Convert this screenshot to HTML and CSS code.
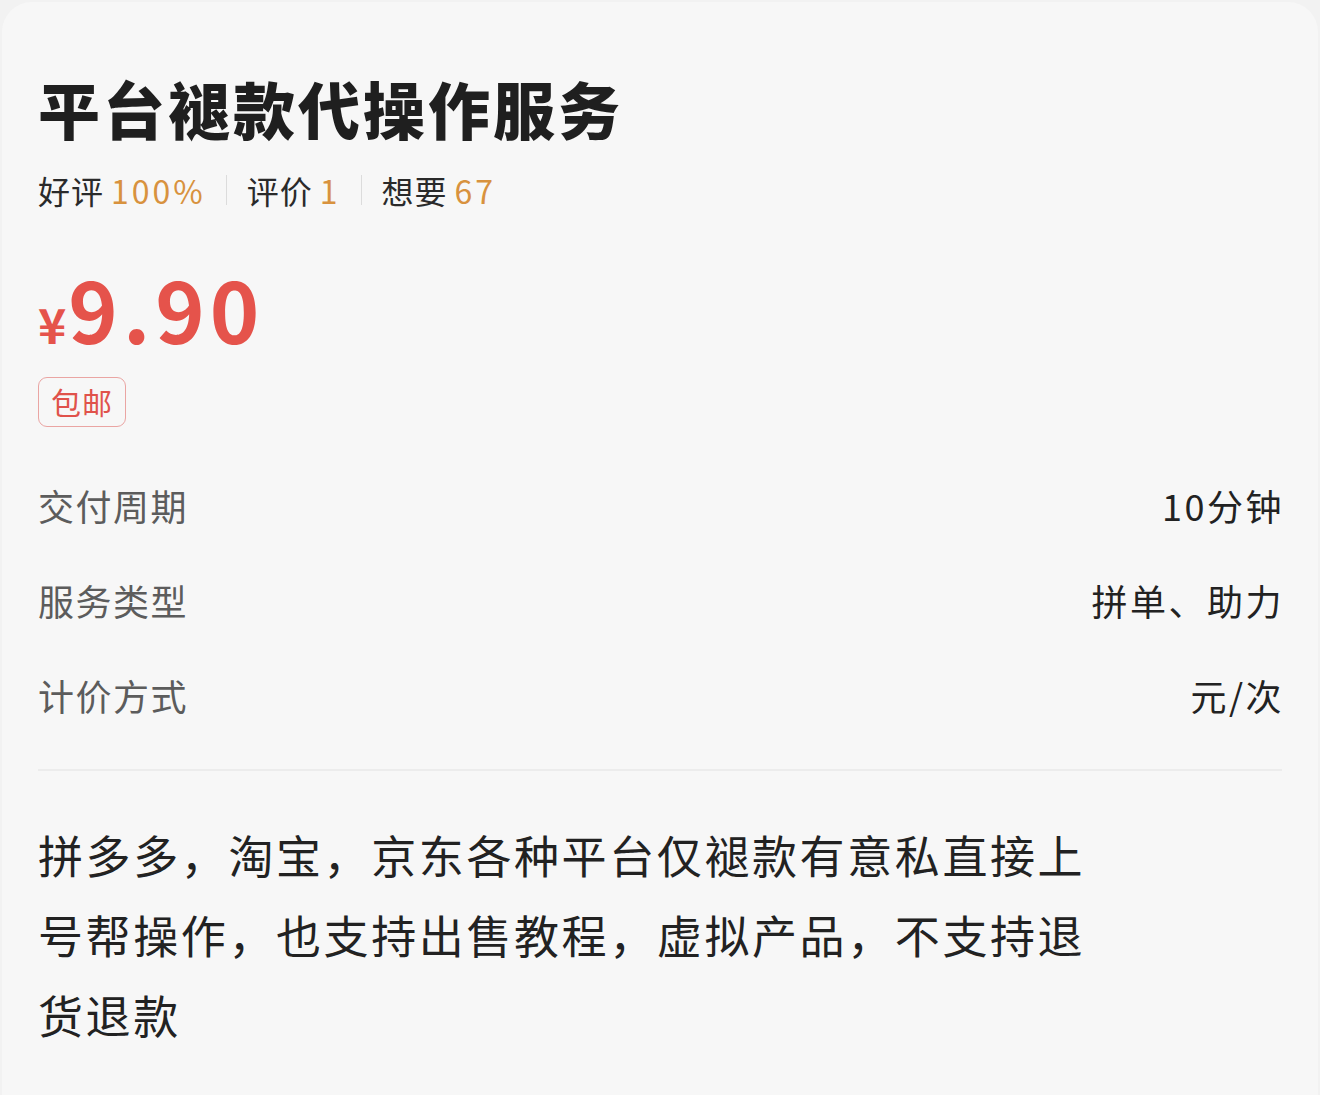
FILE: index.html
```html
<!DOCTYPE html>
<html lang="zh-CN">
<head>
<meta charset="utf-8">
<title>平台褪款代操作服务</title>
<link rel="stylesheet" href="styles.css">
</head>
<body>
<div class="card">
  <h1 class="title">平台褪款代操作服务</h1>
  <div class="stats">
    <span class="stat">好评<span class="num">100%</span></span>
    <span class="sep"></span>
    <span class="stat">评价<span class="num">1</span></span>
    <span class="sep"></span>
    <span class="stat">想要<span class="num">67</span></span>
  </div>
  <div class="price"><span class="yen">¥</span><span class="amount">9.90</span></div>
  <div class="tags"><span class="tag">包邮</span></div>
  <div class="rows">
    <div class="row"><span class="label">交付周期</span><span class="value">10分钟</span></div>
    <div class="row"><span class="label">服务类型</span><span class="value">拼单、助力</span></div>
    <div class="row"><span class="label">计价方式</span><span class="value">元/次</span></div>
  </div>
  <div class="divider"></div>
  <p class="desc">拼多多，淘宝，京东各种平台仅褪款有意私直接上号帮操作，也支持出售教程，虚拟产品，不支持退货退款</p>
</div>
</body>
</html>
```
FILE: styles.css
```css
html, body {
  margin: 0;
  padding: 0;
  background: #f2f2f2;
}
body {
  font-family: "Noto Sans CJK SC", "Noto Sans", sans-serif;
  color: #222;
}
.card {
  background: #f7f7f7;
  border-radius: 30px 30px 0 0;
  margin: 2px 2px 0;
  padding: 0 36px 0 36px;
  min-height: 1093px;
  box-sizing: border-box;
  overflow: hidden;
}
.title {
  margin: 66px 0 0;
  font-size: 62px;
  line-height: 80px;
  font-weight: 900;
  letter-spacing: 3px;
  color: #1f1f1f;
}
.stats {
  margin-top: 20px;
  display: flex;
  align-items: center;
  height: 44px;
  font-size: 32px;
  line-height: 44px;
  color: #2a2a2a;
}
.stat {
  display: inline-flex;
  letter-spacing: 1px;
}
.num {
  color: #d8923e;
  margin-left: 7px;
  letter-spacing: 3px;
}
.sep {
  width: 1px;
  height: 30px;
  background: #dcdcdc;
  margin: 0 20px;
}
.price {
  margin-top: 46px;
  height: 100px;
  display: flex;
  align-items: baseline;
  color: #e5534b;
  font-weight: 700;
  line-height: 100px;
}
.yen {
  font-size: 48px;
  margin-right: 2px;
}
.amount {
  font-size: 84px;
  letter-spacing: 5px;
}
.tags {
  margin-top: 19px;
  display: flex;
}
.tag {
  box-sizing: border-box;
  height: 50px;
  padding: 0 12px;
  border: 1.5px solid #eaa5a3;
  border-radius: 9px;
  color: #e0524b;
  font-size: 30px;
  line-height: 46px;
  letter-spacing: 1px;
}
.rows {
  margin-top: 30px;
  display: flex;
  flex-direction: column;
}
.row {
  height: 95px;
  display: flex;
  justify-content: space-between;
  align-items: center;
  font-size: 36px;
}
.label {
  color: #5c5c5c;
  letter-spacing: 1.5px;
}
.value {
  color: #222;
  letter-spacing: 2.5px;
  margin-right: -2px;
}
.divider {
  margin-top: 27px;
  height: 2px;
  background: #ececec;
}
.desc {
  margin: 44px 0 0;
  width: 1080px;
  font-size: 45px;
  line-height: 80px;
  letter-spacing: 2.6px;
  color: #222;
}
```
